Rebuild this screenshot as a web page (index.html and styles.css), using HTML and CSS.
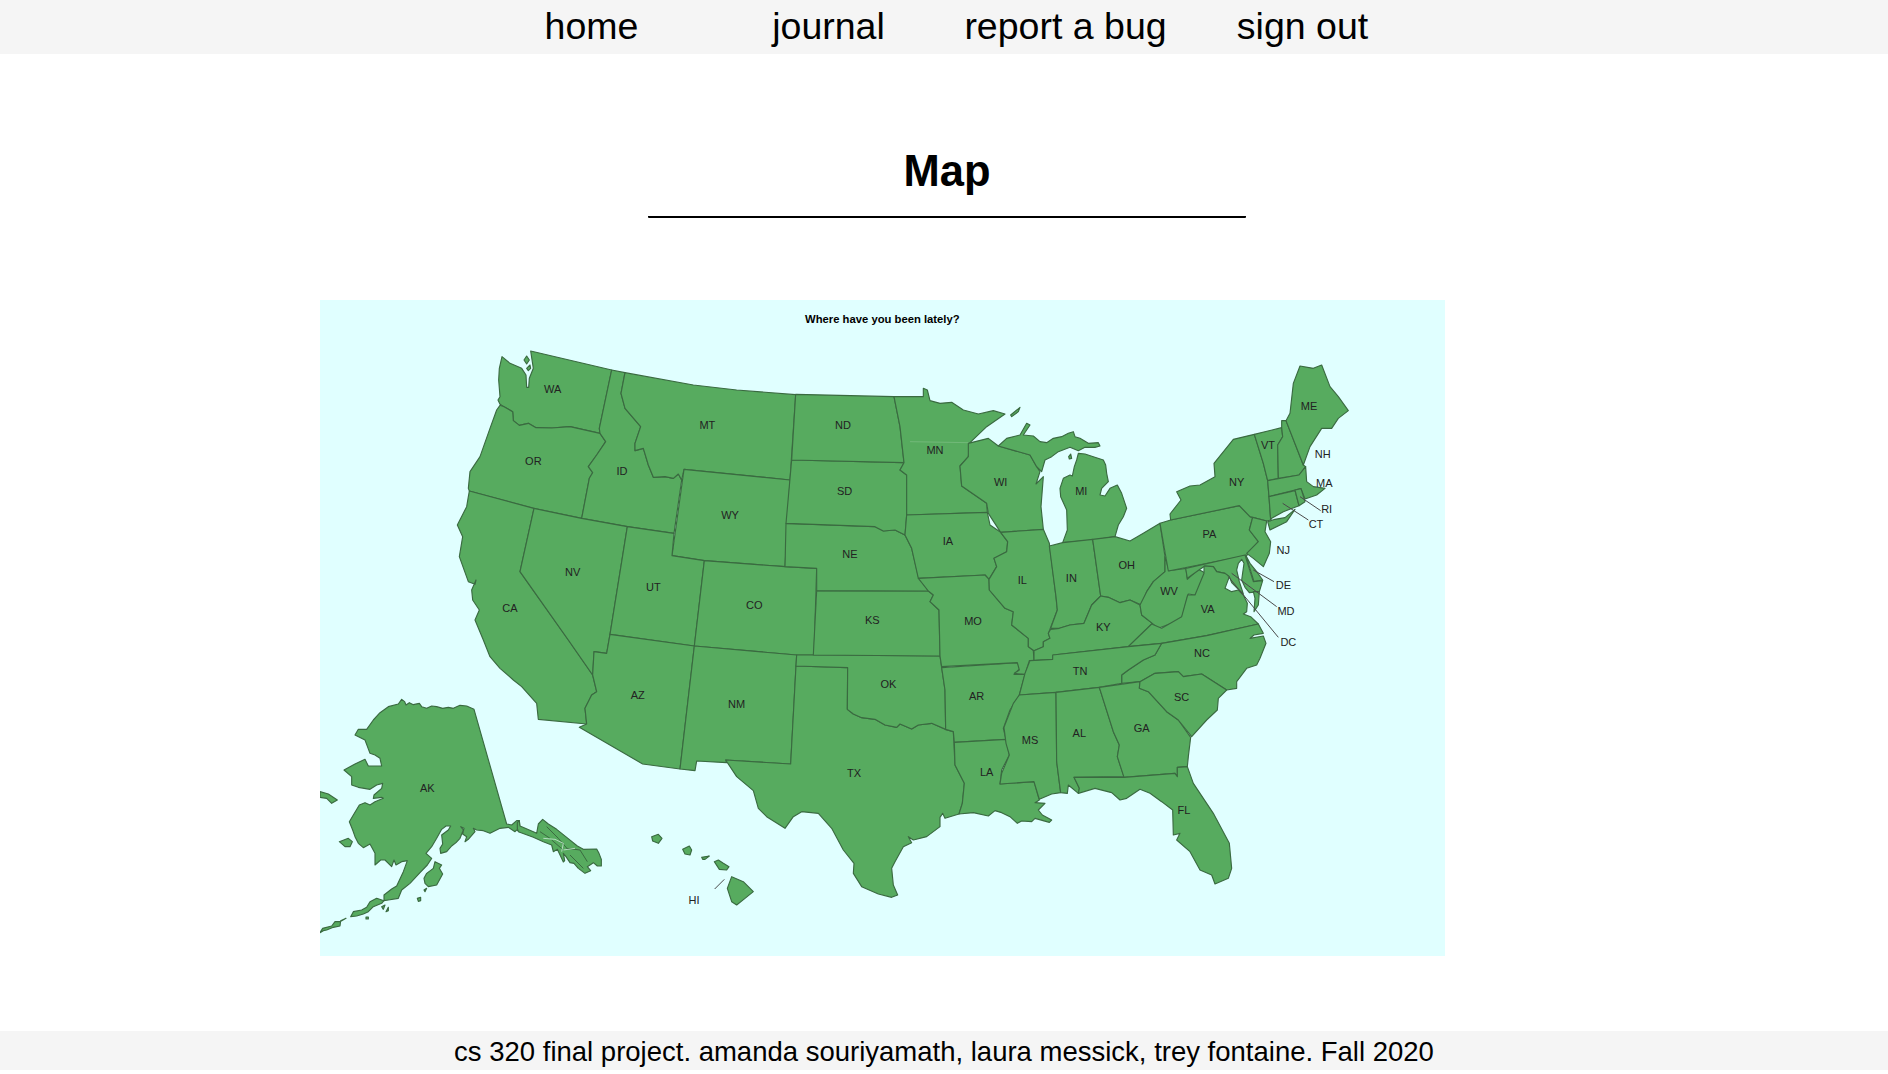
FILE: index.html
```html
<!DOCTYPE html>
<html lang="en">
<head>
<meta charset="utf-8">
<title>Map</title>
<link rel="stylesheet" href="styles.css">
</head>
<body>
<header class="topbar">
  <nav class="nav">
    <a class="nav-link" href="#">home</a>
    <a class="nav-link" href="#">journal</a>
    <a class="nav-link" href="#">report a bug</a>
    <a class="nav-link" href="#">sign out</a>
  </nav>
</header>
<main class="content">
  <div class="heading"><h1 class="title">Map</h1></div>
  <svg class="map" viewBox="0 0 3375 1968" role="img" aria-label="Map of US states">
    <rect class="sea" width="3375" height="1968"/>
    <text class="map-title" x="1687" y="57">Where have you been lately?</text>

    <g class="states">
      <!-- West -->
      <polygon points="632,153 875,210 838,385 840,400 750,380 695,384 648,383 625,370 598,376 580,362 578,335 552,320 540,313 534,300 540,290 536,240 538,205 546,170 570,190 605,205 618,225 620,262 626,262 628,235 640,205"/>
      <polygon points="612,180 620,168 628,180 620,192"/>
      <polygon points="620,205 630,195 632,205 625,212"/>
      <polygon points="540,316 552,320 578,335 580,362 598,376 625,370 648,383 695,384 750,380 840,400 857,425 830,465 805,500 818,518 808,535 785,655 640,625 448,573 445,565 450,515 480,470 510,385 530,330"/>
      <polygon points="875,210 915,218 903,280 915,325 962,380 945,430 945,452 970,445 985,495 1000,532 1035,530 1060,535 1075,522 1085,540 1062,700 922,680 785,655 808,535 818,518 805,500 830,465 857,425 840,400 838,385"/>
      <polygon points="915,218 1120,255 1250,270 1427,284 1410,540 1092,508 1085,540 1075,522 1060,535 1035,530 1000,532 985,495 970,445 945,452 945,430 962,380 915,325 903,280"/>
      <polygon points="1092,508 1410,540 1395,800 1153,782 1056,767"/>
      <polygon points="448,573 642,625 600,815 745,1020 818,1125 830,1175 815,1185 795,1225 800,1272 655,1258 650,1210 605,1160 580,1140 540,1105 510,1070 490,1020 465,960 478,930 458,900 455,870 468,840 465,853 445,845 418,770 428,710 412,675 440,620 445,590"/>
      <polygon points="642,625 785,655 922,680 870,1003 860,1060 822,1055 818,1125 745,1020 600,815"/>
      <polygon points="922,680 1062,700 1056,767 1153,782 1123,1038 870,1003"/>
      <polygon points="1153,782 1395,800 1490,805 1482,1065 1430,1065 1123,1038"/>
    </g>

    <g class="states shift-z5">
      <polygon points="150,43 403,78 360,447 248,432 58,322 80,312 75,265 95,225 110,215 98,165 102,95 140,100"/>
      <polygon points="403,78 710,105 708,138 692,432 497,420 500,428 410,423 405,452 360,447"/>
      <polygon points="708,138 863,143 862,268 880,282 905,293 945,298 975,315 1010,322 1020,312 1055,327 1075,315 1115,310 1155,328 1180,335 1185,435 1213,490 1207,550 1197,582 1155,595 1148,580 1140,592 1140,620 1100,650 1060,660 1045,650 1055,668 1030,680 1005,725 995,745 1000,795 1013,825 995,832 955,822 905,800 880,760 882,730 850,690 815,625 775,580 725,575 700,590 675,625 620,590 595,565 580,512 530,470 497,420 692,432"/>
      <polygon points="710,105 762,105 1140,108 1145,143 1155,210 1157,328 1115,310 1075,315 1055,327 1020,312 1010,322 975,315 945,298 905,293 880,282 862,268 863,143 708,138"/>
      <polygon points="1145,143 1372,128 1380,145 1362,163 1395,163 1378,225 1350,270 1330,325 1338,358 1183,367 1180,335 1157,328 1155,210"/>
      <polygon points="1183,367 1338,358 1348,405 1325,450 1320,492 1422,485 1438,540 1425,548 1455,550 1435,570 1447,585 1475,600 1468,607 1425,595 1415,605 1385,603 1372,610 1350,590 1325,578 1305,572 1285,588 1240,578 1197,582 1207,550 1213,490 1185,435"/>
    </g>

    <g class="states shift-z2">
      <polygon points="110,752 445,753 460,765 450,785 477,810 480,948 100,945"/>
      <polygon points="18,550 285,560 310,573 345,570 375,585 395,625 415,710 445,753 110,752 110,685 15,680"/>
      <polygon points="35,360 372,368 360,390 380,405 380,525 375,585 345,570 310,573 285,560 18,550"/>
      <polygon points="47,163 342,170 360,260 372,368 35,360"/>
      <polygon points="342,170 430,170 430,145 442,150 450,182 480,190 515,187 550,210 595,222 640,212 675,222 620,260 570,308 565,350 540,378 545,438 620,490 622,517 380,525 380,405 360,390 372,368 360,260"/>
      <polygon points="692,225 720,202 715,215 695,230"/>
      <polygon points="565,310 625,295 655,318 750,345 770,380 780,395 768,432 790,410 783,500 790,568 662,577 625,520 620,490 545,438 540,378 565,350"/>
      <polygon points="655,318 680,295 720,285 740,250 750,255 730,285 760,288 780,305 800,308 820,295 845,290 865,280 880,275 885,290 900,295 925,310 955,308 960,318 945,322 915,322 895,332 870,322 835,335 815,350 795,360 785,395 770,380 750,345"/>
      <polygon points="895,340 915,342 940,350 970,360 977,375 980,400 985,425 965,445 960,465 975,468 990,445 1012,435 1025,460 1040,505 1030,530 1015,555 1005,590 940,600 848,608 862,570 860,510 842,470 840,445 850,415 870,405 877,408 883,380 890,360"/>
      <polygon points="866,350 872,342 875,355 868,357"/>
      <polygon points="380,525 622,517 630,555 662,577 683,605 680,635 642,655 650,680 627,718 615,705 415,715 395,625 375,585"/>
      <polygon points="415,715 615,705 627,718 628,750 675,805 700,815 695,855 745,895 745,920 760,932 762,962 748,962 735,1003 703,1000 718,990 712,968 485,980 480,948 477,810 450,785 460,765 445,753"/>
      <polygon points="662,577 790,568 808,610 828,770 832,810 805,880 810,895 790,905 790,920 762,932 745,920 745,895 695,855 700,815 675,805 628,750 627,718 650,680 642,655 680,635 683,605"/>
      <polygon points="808,618 848,608 938,598 962,768 935,795 912,850 870,855 838,865 812,865 832,810 828,770"/>
      <polygon points="938,598 1005,590 1050,603 1090,580 1140,550 1155,650 1155,695 1120,725 1100,755 1085,795 1050,780 1020,788 985,772 962,768"/>
      <polygon points="812,868 838,865 870,855 912,850 935,795 962,768 985,772 1020,788 1050,780 1080,795 1085,825 1117,850 1045,920 820,945 820,958 762,962 762,932 790,920 790,905 810,895 805,880"/>
      <polygon points="1155,650 1167,692 1218,685 1222,718 1255,688 1277,700 1270,730 1245,765 1225,762 1205,835 1175,850 1135,865 1117,850 1085,825 1080,795 1100,755 1120,725 1155,695"/>
      <path class="seam" d="M390,305 L565,308"/>
    </g>

    <g class="states shift-z3">
      <polygon points="212,510 418,467 450,500 458,502 448,540 475,575 440,617 205,663 180,520"/>
      <polygon points="212,510 210,492 243,450 230,425 270,408 300,405 345,380 342,340 400,268 463,253 490,340 503,392 507,440 512,510 500,513 458,502 450,500 418,467"/>
      <polygon points="503,515 525,508 555,503 585,478 560,515 510,540"/>
      <polygon points="463,253 545,233 548,260 533,285 535,385 503,392 490,340"/>
      <polygon points="545,233 545,212 558,212 610,345 617,350 597,375 535,385 533,285 548,260"/>
      <polygon points="558,212 570,190 580,100 600,48 640,55 665,45 690,110 715,140 745,182 715,205 695,235 665,235 630,290 610,345"/>
      <polygon points="503,392 597,375 617,350 620,395 640,410 675,415 650,435 615,447 603,416 585,420 507,440"/>
      <polygon points="507,440 585,422 597,467 550,485 515,505 512,510"/>
      <polygon points="585,420 603,416 615,455 597,467"/>
      <polygon points="458,502 500,513 495,545 512,575 508,610 490,650 460,625 440,610 475,575 448,540"/>
      <polygon points="437,615 448,650 462,695 488,690 470,665 450,640"/>
      <polygon points="257,655 435,615 460,695 488,692 478,725 448,728 435,712 425,690 432,640 425,628 415,640 410,660 418,695 430,732 415,718 395,698 388,680 375,670 350,665 340,650 315,648 300,658 262,685"/>
      <polygon points="85,890 155,822 185,835 245,800 263,735 285,735 312,670 312,648 340,650 350,665 375,670 388,680 375,715 395,725 415,720 430,735 442,760 440,785 430,792 452,800 475,822 320,857 185,880"/>
      <polygon points="478,725 475,765 462,785 465,745 460,725"/>
    </g>

    <g class="states shift-z6">
      <polygon points="425,130 425,105 445,90 490,60 525,45 545,10 680,-13 835,-48 850,-20 822,-15 810,-5 850,-12 858,10 840,55 830,75 800,85 770,125 770,145 740,150 665,102 610,110 595,95 525,100 480,125"/>
      <polygon points="118,165 135,100 150,62 218,58 218,45 445,20 545,10 525,45 490,60 445,90 425,105 425,130 358,142 228,157"/>
      <polygon points="118,165 228,157 230,365 242,458 215,462 178,478 162,425 60,432 65,400 88,345 78,310 72,262 100,190"/>
      <polygon points="228,157 358,142 400,275 418,315 412,350 432,410 282,412 298,445 295,460 265,435 262,460 242,458 230,365"/>
      <polygon points="358,142 480,125 478,145 505,155 560,215 595,240 632,292 625,350 622,380 592,382 592,410 585,400 432,412 412,350 418,315 400,275"/>
      <polygon points="480,125 525,100 595,95 610,110 665,102 740,150 715,175 712,210 680,240 635,290 595,240 560,215 505,155 478,145"/>
      <polygon points="282,412 432,412 585,400 592,410 592,382 622,380 640,430 700,520 748,610 755,685 745,715 705,732 695,705 660,690 630,635 590,600 600,580 580,585 578,510 545,485 510,460 480,448 440,475 420,480 395,458 345,445 295,460 298,445"/>
    </g>

    <g class="states shift-ak">
      <polygon points="245,28 254,35 258,45 268,38 280,44 298,40 305,50 320,55 335,48 350,50 368,55 385,52 400,55 420,46 440,48 462,58 560,402 575,405 590,392 598,392 600,425 590,420 585,425 565,412 540,415 510,430 490,422 470,420 460,415 465,425 445,448 435,455 440,440 428,432 432,415 422,410 430,420 420,445 408,458 395,468 380,485 362,490 360,475 368,462 365,435 385,420 392,408 378,408 365,418 350,445 335,470 318,490 335,505 322,525 300,548 270,580 245,600 235,625 205,630 192,632 192,615 215,597 230,588 250,545 262,512 245,515 228,525 222,510 215,530 195,510 182,510 165,525 165,490 150,462 130,473 115,460 105,440 98,420 88,395 100,375 118,345 135,338 150,345 165,335 190,325 185,322 160,325 162,315 185,295 188,280 170,285 150,298 115,292 95,285 95,260 72,240 105,222 135,208 145,228 185,228 180,205 165,195 150,190 135,150 105,135 115,118 140,118 160,90 180,68 205,50 235,42"/>
      <polygon points="192,632 170,625 150,635 140,652 125,660 100,665 92,680 110,678 130,672 145,665 160,650 185,640"/>
      <polygon points="185,650 195,645 190,658"/>
      <polygon points="198,665 205,652 205,662"/>
      <polygon points="138,681 145,681 145,687 138,687"/>
      <polygon points="0,728 8,715 35,708 45,695 60,695 78,685 62,692 60,708 40,712 20,720 10,722"/>
      <polygon points="58,455 85,445 97,455 90,470 75,470"/>
      <polygon points="0,305 25,312 52,330 35,340 20,325 0,322"/>
      <polygon points="312,565 320,550 340,535 345,515 365,525 358,535 368,552 350,585 325,590 315,580"/>
      <polygon points="292,625 302,622 302,632 295,634"/>
      <polygon points="312,600 320,595 315,605"/>
      <text class="label" x="322" y="293">AK</text>
    </g>

    <g class="states shift-ph">
      <polygon points="52,68 58,62 60,78 100,95 110,100 115,72 128,58 145,72 170,88 200,112 232,138 250,148 290,147 297,160 304,178 304,198 292,198 280,188 262,200 272,212 255,220 235,205 222,190 210,188 198,170 190,160 194,182 190,186 172,148 160,155 155,135 130,125 100,112 55,95 52,85"/>
      <path class="inlet" d="M120,95 L150,115 M140,80 L175,115 L205,150 M200,145 L240,150 L262,185 M155,120 L190,150 M210,165 L250,205"/>
      <path class="channel" d="M130,115 L165,118 L190,130 L185,155 M190,150 L225,145"/>
    </g>

    <g class="states shift-z4">
      <polygon points="995,470 1015,463 1026,475 1015,490 998,483"/>
      <polygon points="1088,508 1108,498 1115,510 1110,525 1095,522"/>
      <polygon points="1145,532 1168,528 1155,538 1148,538"/>
      <polygon points="1183,545 1195,540 1210,550 1227,560 1220,570 1198,568"/>
      <polygon points="1235,590 1270,605 1300,635 1275,655 1250,675 1235,665 1222,625"/>
      <path class="leader" d="M1184,627 L1213,598"/>
      <text class="label" x="1122" y="660">HI</text>
    </g>

    <g class="shift-z3">
      <path class="leader" d="M460,660 L522,695 M395,670 L530,770 M385,680 L535,862 M548,460 L625,510 M600,440 L662,482"/>
      <text class="label" x="668" y="312">NH</text>
      <text class="label" x="673" y="400">MA</text>
      <text class="label" x="680" y="478">RI</text>
      <text class="label" x="648" y="522">CT</text>
      <text class="label" x="550" y="600">NJ</text>
      <text class="label" x="550" y="705">DE</text>
      <text class="label" x="558" y="783">MD</text>
      <text class="label" x="565" y="876">DC</text>
      <text class="label" x="627" y="168">ME</text>
      <text class="label" x="504" y="285">VT</text>
      <text class="label" x="410" y="396">NY</text>
      <text class="label" x="328" y="552">PA</text>
      <text class="label" x="80" y="646">OH</text>
      <text class="label" x="207" y="723">WV</text>
      <text class="label" x="323" y="778">VA</text>
      <text class="label" x="306" y="909">NC</text>
    </g>
    <g class="shift-z2">
      <text class="label" x="189" y="255">ND</text>
      <text class="label" x="194" y="453">SD</text>
      <text class="label" x="210" y="642">NE</text>
      <text class="label" x="277" y="840">KS</text>
      <text class="label" x="465" y="330">MN</text>
      <text class="label" x="504" y="603">IA</text>
      <text class="label" x="579" y="843">MO</text>
      <text class="label" x="662" y="426">WI</text>
      <text class="label" x="904" y="453">MI</text>
      <text class="label" x="727" y="720">IL</text>
      <text class="label" x="874" y="714">IN</text>
      <text class="label" x="970" y="861">KY</text>
      <text class="label" x="900" y="993">TN</text>
    </g>
    <g>
      <text class="label" x="698" y="267">WA</text>
      <text class="label" x="640" y="483">OR</text>
      <text class="label" x="906" y="513">ID</text>
      <text class="label" x="1162" y="375">MT</text>
      <text class="label" x="1230" y="645">WY</text>
      <text class="label" x="1000" y="861">UT</text>
      <text class="label" x="1303" y="915">CO</text>
      <text class="label" x="758" y="815">NV</text>
      <text class="label" x="570" y="924">CA</text>
    </g>
    <g class="shift-z5">
      <text class="label" x="233" y="225">AZ</text>
      <text class="label" x="530" y="252">NM</text>
      <text class="label" x="985" y="192">OK</text>
      <text class="label" x="882" y="459">TX</text>
      <text class="label" x="1250" y="228">AR</text>
      <text class="label" x="1280" y="456">LA</text>
      <text class="label" x="1410" y="360">MS</text>
    </g>
    <g class="shift-z6">
      <text class="label" x="298" y="280">AL</text>
      <text class="label" x="485" y="264">GA</text>
      <text class="label" x="605" y="170">SC</text>
      <text class="label" x="612" y="510">FL</text>
    </g>
  </svg>
</main>
<footer class="footer">cs 320 final project. amanda souriyamath, laura messick, trey fontaine. Fall 2020</footer>
</body>
</html>
```

FILE: styles.css
```css
* { box-sizing: border-box; }

html, body { margin: 0; padding: 0; }

body {
  background: #fff;
  color: #000;
  font-family: "Liberation Sans", Arial, sans-serif;
}

.topbar {
  height: 54px;
  background: #f5f5f5;
}

.nav {
  display: grid;
  grid-template-columns: repeat(4, 237px);
  justify-content: center;
  padding-left: 6px;
}

.nav-link {
  font-size: 37.5px;
  line-height: 52px;
  text-align: center;
  color: #000;
  text-decoration: none;
}

.content {
  padding-top: 92px;
}

.heading {
  width: 598px;
  margin-left: 648px;
  border-bottom: 2px solid #000;
  border-radius: 1px;
  padding-bottom: 20px;
}

.title {
  margin: 0;
  font-size: 43.5px;
  line-height: 50px;
  font-weight: 700;
  text-align: center;
}

.map {
  display: block;
  width: 1125px;
  height: 656px;
  margin: 82px 0 0 320px;
}

.sea { fill: #e0ffff; }

.map-title {
  font-size: 33.8px;
  font-weight: 700;
  fill: #000;
  text-anchor: middle;
  dominant-baseline: central;
}

.states polygon {
  fill: #57ab5f;
  stroke: #3a6a40;
  stroke-width: 3.4;
  stroke-linejoin: round;
}

.seam { fill: none; stroke: #8cc793; stroke-width: 1.5; }
.inlet { fill: none; stroke: #3a6a40; stroke-width: 3; }
.channel { fill: none; stroke: #c4e6d0; stroke-width: 2.5; }
.leader { fill: none; stroke: #4a4a4a; stroke-width: 3; }

.label {
  font-size: 33px;
  fill: #222;
  text-anchor: middle;
  dominant-baseline: central;
}

.shift-z2 { transform: translate(1380px, 120px); }
.shift-z3 { transform: translate(2340px, 150px); }
.shift-z4 { transform: translate(0, 1140px); }
.shift-z5 { transform: translate(720px, 960px); }
.shift-z6 { transform: translate(1980px, 1020px); }
.shift-ak { transform: translate(0, 1170px); }
.shift-ph { transform: translate(540px, 1500px); }

.footer {
  height: 39px;
  margin-top: 75px;
  padding-top: 2px;
  background: #f5f5f5;
  font-size: 27.5px;
  line-height: 38px;
  text-align: center;
}
```
